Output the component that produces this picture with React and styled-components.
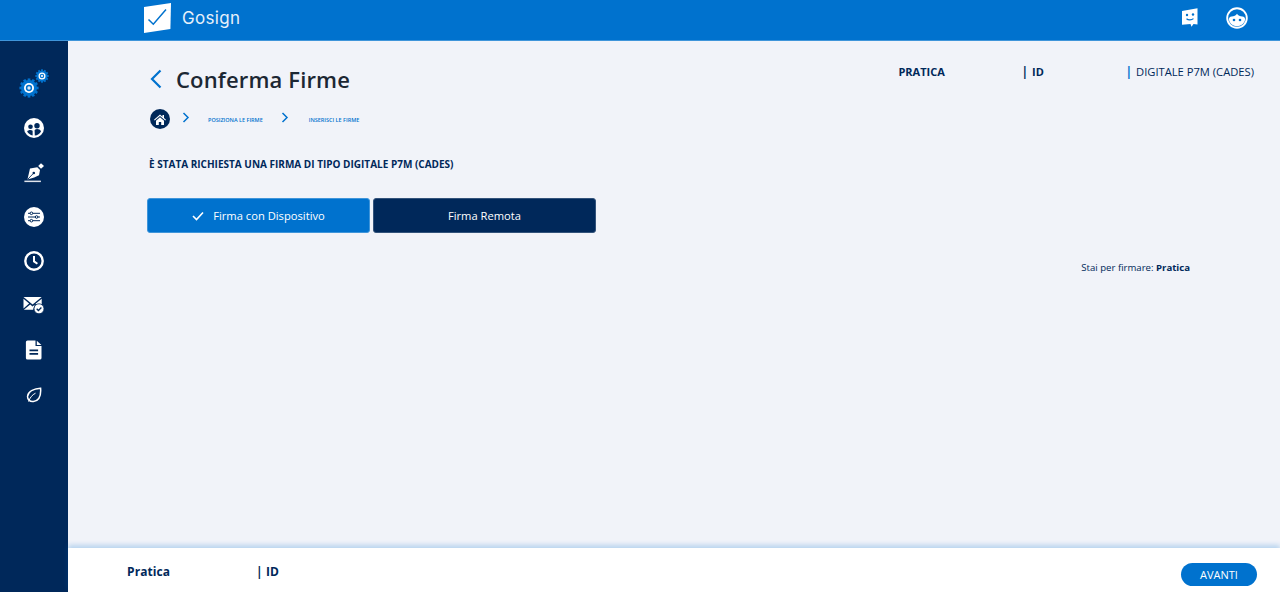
import React from 'react';
import styled, { createGlobalStyle } from 'styled-components';

const GlobalStyle = createGlobalStyle`
  html, body {
    margin: 0;
    height: 100%;
    overflow: hidden;
  }
  body {
    font-family: 'Open Sans', 'Noto Sans', sans-serif;
    background: #f1f3f9;
    color: #00285a;
  }
`;

function GearIcon({ size }) {
  const teeth = [0, 30, 60, 90, 120, 150, 180, 210, 240, 270, 300, 330];
  return (
    <svg width={size} height={size} viewBox="0 0 24 24">
      {teeth.map((a) => (
        <rect key={a} x="10.4" y="0.5" width="3.2" height="4" fill="#0072ce" transform={`rotate(${a} 12 12)`} />
      ))}
      <circle cx="12" cy="12" r="9.6" fill="#0072ce" />
      <circle cx="12" cy="12" r="6" fill="#fff" />
      <circle cx="12" cy="12" r="3.8" fill="#0072ce" />
      <circle cx="12" cy="12" r="2" fill="#dfeaf6" />
    </svg>
  );
}

function PeopleIcon() {
  return (
    <svg width="20" height="20" viewBox="0 0 20 20">
      <circle cx="10" cy="10" r="10" fill="#fff" />
      <circle cx="6.5" cy="8.7" r="2.3" fill="#00285a" />
      <circle cx="13" cy="7.8" r="2.7" fill="#00285a" />
      <path d="M3.200 13.600c.5-1 1.700-1.500 3.100-1.500.9 0 1.700.2 2.300.6v4.700c-2.300-.3-4.300-1.700-5.400-3.800z" fill="#00285a" />
      <path d="M17 13.400c-.7-1.500-2.100-2.300-3.900-2.300-1 0-1.800.3-2.500.8l.2 5.600c2.800-.3 5-1.800 6.200-4.100z" fill="#00285a" />
    </svg>
  );
}

function PenIcon() {
  return (
    <svg width="20" height="20" viewBox="0 0 20 20">
      <path d="M14.200 3L17 0.200 20 3 17 5.800z" fill="#fff" />
      <path d="M6 5.500l7.300-1.200 2.700 2.800-1 5.200-4.800 2.300-6.700 2 1.500-6.900z" fill="#fff" />
      <path d="M3.800 16.200l5.400-5.600" stroke="#00285a" strokeWidth="0.9" />
      <circle cx="9.800" cy="10" r="1.300" fill="#00285a" />
      <rect x="0.400" y="17.600" width="16.500" height="1.500" fill="#dfe4ec" />
    </svg>
  );
}

function SlidersIcon() {
  return (
    <svg width="20" height="20" viewBox="0 0 20 20">
      <circle cx="10" cy="10" r="10" fill="#fff" />
      <g stroke="#00285a" strokeWidth="1" fill="#fff">
        <path d="M4 6.300h12M4 10h12M4 13.700h12" />
        <circle cx="7.400" cy="6.300" r="1.300" />
        <circle cx="12.600" cy="10" r="1.300" />
        <circle cx="7.400" cy="13.700" r="1.300" />
      </g>
    </svg>
  );
}

function ClockIcon() {
  return (
    <svg width="20" height="20" viewBox="0 0 20 20">
      <circle cx="10" cy="10" r="8.700" fill="none" stroke="#fff" strokeWidth="2.400" />
      <path d="M10 5v5.400l3.400 2.400" fill="none" stroke="#fff" strokeWidth="2" />
    </svg>
  );
}

function MailIcon() {
  return (
    <svg width="22" height="19" viewBox="0 0 22 19">
      <path d="M0.500 1h18.200L9.600 8.600z" fill="#fff" />
      <path d="M0.500 2.800l5.600 4.700-5.600 5zM18.700 2.800v5.400h-5.900l-.2-.4zM0.900 13.800l6.300-5.400 2.400 2 2-1.600-1.400 5z" fill="#fff" />
      <circle cx="16" cy="12.800" r="5" fill="#fff" stroke="#00285a" strokeWidth="0.800" />
      <path d="M13.700 12.800l1.700 1.700 3-3" fill="none" stroke="#00285a" strokeWidth="1.300" />
    </svg>
  );
}

function DocIcon() {
  return (
    <svg width="18" height="20" viewBox="0 0 18 20">
      <path d="M2.500 0.500h8v5.600h6V18a1.600 1.600 0 0 1-1.600 1.600H2.500A1.600 1.600 0 0 1 .9 18V2.100A1.600 1.600 0 0 1 2.500.5z" fill="#fff" />
      <path d="M11.800 0.700l4.600 4.200h-4.600z" fill="#fff" />
      <path d="M4.500 10.400h8.600M4.500 13.900h8.600" stroke="#00285a" strokeWidth="1.600" />
    </svg>
  );
}

function LeafIcon() {
  return (
    <svg width="16" height="16" viewBox="0 0 16 16">
      <path d="M14.600 1.200c.5 6.600-1.200 12.600-7.200 13.300-3.700.4-6.200-2.200-5.800-5.400C2.200 4.100 8.700 1.700 14.600 1.200z" fill="none" stroke="#fff" strokeWidth="1.500" />
      <path d="M2.600 14.600c1.300-4 3.600-6.800 6.900-8.400" fill="none" stroke="#fff" strokeWidth="1" />
    </svg>
  );
}

function LogoMark() {
  return (
    <svg width="27" height="30" viewBox="0 0 27 30">
      <path d="M0 4L27 0 26.400 26 0 30z" fill="#fff" />
      <path d="M4.500 16.500l4.800 4.700L22 6.500" fill="none" stroke="#0072ce" strokeWidth="1.500" />
    </svg>
  );
}

function ChatFaceIcon() {
  return (
    <svg width="17" height="19" viewBox="0 0 17 19">
      <path d="M1 3L16.500 0.300V16.500L12.500 16 10.500 18.800 9.500 16 1 16.700z" fill="#fff" />
      <circle cx="6" cy="7" r="1.200" fill="#0072ce" />
      <circle cx="12" cy="6.500" r="1.200" fill="#0072ce" />
      <path d="M5.500 10.800c1.800 1.500 5 1.500 7-.2" fill="none" stroke="#0072ce" strokeWidth="1.200" />
    </svg>
  );
}

function FaceIcon() {
  return (
    <svg width="22" height="22" viewBox="0 0 22 22">
      <circle cx="11" cy="11" r="9.800" fill="#0072ce" stroke="#fff" strokeWidth="1.900" />
      <path d="M3 13c-.6-2 1-3.600 2.600-3.600 2.400 0 4.200-.7 5.400-2.600 1.200 1.900 3 2.600 5.400 2.600 1.600 0 3.200 1.600 2.600 3.600-.9 3.900-4.200 6.200-8 6.200s-7.100-2.300-8-6.200z" fill="#fff" />
      <circle cx="8" cy="13" r="1.300" fill="#0072ce" />
      <circle cx="14" cy="13" r="1.300" fill="#0072ce" />
    </svg>
  );
}

function Chevron({ size = 8 }) {
  return (
    <svg width={size} height={size * 1.4} viewBox="0 0 8 11">
      <path d="M1.500 1l4.500 4.500L1.500 10" fill="none" stroke="#0072ce" strokeWidth="1.500" />
    </svg>
  );
}

function HomeIcon() {
  return (
    <svg width="12" height="11" viewBox="0 0 12 11">
      <path d="M6 0.500L0 5.800l.7.700L6 2l5.300 4.500.7-.7-2-1.800V1H8.500v1.700z" fill="#fff" />
      <path d="M2 6.700L6 3.200l4 3.500V11H7.200V8H4.800V11H2z" fill="#fff" />
    </svg>
  );
}

function App() {
  return (
    <Page>
      <GlobalStyle />
      <Header>
        <Brand>
          <LogoMark />
          <BrandName>Gosign</BrandName>
        </Brand>
        <HeaderIcons>
          <ChatFaceIcon />
          <FaceIcon />
        </HeaderIcons>
      </Header>
      <Body>
        <Sidebar>
          <Gears>
            <GearSmall><GearIcon size={14} /></GearSmall>
            <GearIcon size={20} />
          </Gears>
          <SideItem><PeopleIcon /></SideItem>
          <SideItem><PenIcon /></SideItem>
          <SideItem><SlidersIcon /></SideItem>
          <SideItem><ClockIcon /></SideItem>
          <SideItem><MailIcon /></SideItem>
          <SideItem><DocIcon /></SideItem>
          <SideItem><LeafIcon /></SideItem>
        </Sidebar>
        <Main>
          <Content>
            <TopRow>
              <TitleBlock>
                <TitleRow>
                  <svg width="12" height="20" viewBox="0 0 12 20">
                    <path d="M10.500 1.500L2 10l8.500 8.500" fill="none" stroke="#0072ce" strokeWidth="2.200" />
                  </svg>
                  <Title>Conferma Firme</Title>
                </TitleRow>
                <Breadcrumb>
                  <HomeBadge><HomeIcon /></HomeBadge>
                  <Chevron />
                  <Crumb>POSIZIONA LE FIRME</Crumb>
                  <Chevron />
                  <Crumb>INSERISCI LE FIRME</Crumb>
                </Breadcrumb>
              </TitleBlock>
              <InfoRow>
                <InfoStrong $width={123}>PRATICA</InfoStrong>
                <InfoStrong $width={104}><Bar>|</Bar>ID</InfoStrong>
                <InfoLight><Bar $accent>|</Bar>DIGITALE P7M (CADES)</InfoLight>
              </InfoRow>
            </TopRow>
            <Notice>È STATA RICHIESTA UNA FIRMA DI TIPO DIGITALE P7M (CADES)</Notice>
            <Tabs>
              <TabButton $active>
                <svg width="12" height="10" viewBox="0 0 12 10">
                  <path d="M1 5l3.500 3.500L11 1.500" fill="none" stroke="#fff" strokeWidth="1.600" />
                </svg>
                Firma con Dispositivo
              </TabButton>
              <TabButton>Firma Remota</TabButton>
            </Tabs>
            <SignNote>Stai per firmare: <b>Pratica</b></SignNote>
          </Content>
          <Footer>
            <FooterInfo>
              <FooterName>Pratica</FooterName>
              <FooterId>| ID</FooterId>
            </FooterInfo>
            <NextButton>AVANTI</NextButton>
          </Footer>
        </Main>
      </Body>
    </Page>
  );
}

const Page = styled.div`
  display: flex;
  flex-direction: column;
  height: 592px;
`;

const Header = styled.header`
  flex: 0 0 41px;
  box-sizing: border-box;
  display: flex;
  align-items: center;
  justify-content: space-between;
  padding: 0 32px 5px 144px;
  background: #0072ce;
  border-bottom: 1px solid #3f95da;
`;

const Brand = styled.div`
  display: flex;
  align-items: center;
  gap: 11px;
`;

const BrandName = styled.span`
  font-family: 'Inter', sans-serif;
  font-size: 17px;
  letter-spacing: 0.3px;
  color: #e6f0fa;
`;

const HeaderIcons = styled.div`
  display: flex;
  align-items: center;
  gap: 28px;
`;

const Body = styled.div`
  flex: 1;
  display: flex;
  min-height: 0;
`;

const Sidebar = styled.nav`
  flex: 0 0 68px;
  display: flex;
  flex-direction: column;
  align-items: center;
  padding-top: 25px;
  background: #00285a;
`;

const Gears = styled.div`
  position: relative;
  width: 30px;
  height: 32px;
  display: flex;
  align-items: flex-end;
  margin-bottom: 8px;
`;

const GearSmall = styled.span`
  position: absolute;
  top: 0;
  right: 0;
`;

const SideItem = styled.div`
  height: 44.4px;
  display: flex;
  align-items: center;
  justify-content: center;
`;

const Main = styled.main`
  flex: 1;
  display: flex;
  flex-direction: column;
  min-width: 0;
`;

const Content = styled.section`
  flex: 1;
  padding: 22px 26px 0 79px;
`;

const TopRow = styled.div`
  display: flex;
  justify-content: space-between;
  align-items: flex-start;
`;

const TitleBlock = styled.div`
  display: flex;
  flex-direction: column;
  padding-left: 2.5px;
`;

const TitleRow = styled.div`
  display: flex;
  align-items: center;
  gap: 14px;
  height: 32px;
  padding-left: 0.5px;
`;

const Title = styled.h1`
  margin: 0;
  font-size: 22px;
  font-weight: 600;
  letter-spacing: 0.15px;
  color: #1c2733;
`;

const Breadcrumb = styled.div`
  display: flex;
  align-items: center;
  margin-top: 13px;
  height: 22px;

  svg:nth-child(2) {
    margin: 0 0 2px 12px;
  }
  svg:nth-child(4) {
    margin: 0 0 2px 18px;
  }
`;

const HomeBadge = styled.span`
  width: 20px;
  height: 20px;
  border-radius: 50%;
  background: #00285a;
  display: flex;
  align-items: center;
  justify-content: center;
`;

const Crumb = styled.span`
  font-size: 5.5px;
  font-weight: 600;
  color: #0072ce;
  margin-left: 18.5px;
  padding-top: 2px;
  &:last-child {
    margin-left: 20px;
  }
`;

const InfoRow = styled.div`
  display: flex;
  align-items: center;
  font-size: 11px;
  line-height: 16px;
  margin-top: 1px;
`;

const InfoStrong = styled.span`
  width: ${(p) => p.$width}px;
  font-weight: 700;
`;

const InfoLight = styled.span`
  font-weight: 400;
  font-size: 11.2px;
`;

const Bar = styled.span`
  color: ${(p) => (p.$accent ? '#0072ce' : '#00285a')};
  font-weight: 700;
  margin-right: 4px;
  font-size: 12px;
`;

const Notice = styled.p`
  margin: 28px 0 0;
  font-size: 10px;
  line-height: 12px;
  font-weight: 700;
  padding-left: 2px;
`;

const Tabs = styled.div`
  display: flex;
  gap: 3px;
  margin-top: 28px;
`;

const TabButton = styled.button`
  width: 223px;
  height: 35px;
  display: flex;
  align-items: center;
  justify-content: center;
  gap: 9px;
  padding: 0;
  border: 1px solid ${(p) => (p.$active ? '#3f95da' : '#33537b')};
  border-radius: 3px;
  background: ${(p) => (p.$active ? '#0072ce' : '#00285a')};
  color: #fff;
  font-family: inherit;
  font-size: 11.2px;
`;

const SignNote = styled.p`
  margin: 29px 64px 0 0;
  text-align: right;
  font-size: 9.6px;
  line-height: 12px;
  b {
    font-weight: 700;
  }
`;

const Footer = styled.footer`
  flex: 0 0 44px;
  box-sizing: border-box;
  display: flex;
  align-items: center;
  justify-content: space-between;
  padding: 2px 23px 0 59px;
  background: #fff;
  box-shadow: 0 -3px 5px rgba(0, 114, 206, 0.24);
`;

const FooterInfo = styled.div`
  display: flex;
  align-items: center;
  font-size: 12px;
  font-weight: 700;
  letter-spacing: 0.1px;
`;

const FooterName = styled.span`
  width: 129px;
`;

const FooterId = styled.span``;

const NextButton = styled.button`
  width: 76px;
  height: 23px;
  margin-top: 7px;
  border: none;
  border-radius: 12px;
  background: #0072ce;
  color: #fff;
  font-family: inherit;
  font-size: 11px;
  padding: 0;
`;

export default App;
